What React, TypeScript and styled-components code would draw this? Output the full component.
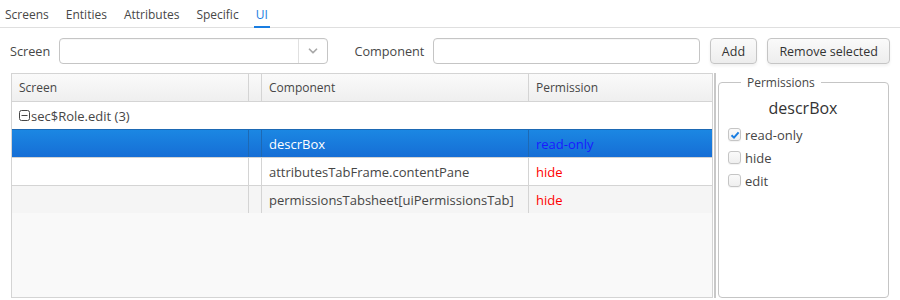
import styled, { createGlobalStyle } from "styled-components"
import { ChevronDown } from "lucide-react"

const GlobalStyle = createGlobalStyle`
  body {
    margin: 0;
    background: #fff;
    font-family: "Open Sans", "Liberation Sans", sans-serif;
    font-size: 13px;
    color: #474747;
  }
`

const Page = styled.div`
  width: 900px;
  height: 300px;
  display: flex;
  flex-direction: column;
  overflow: hidden;
`

const TabBar = styled.div`
  display: flex;
  height: 27px;
  padding-left: 3px;
  gap: 13px;
  border-bottom: 1px solid #dfdfdf;
`

const Tab = styled.div<{ $active?: boolean }>`
  display: flex;
  align-items: center;
  padding: 2px 2px 0 2px;
  margin-bottom: -1px;
  font-size: 12px;
  color: ${(p) => (p.$active ? "#197de1" : "#474747")};
  border-bottom: 2px solid ${(p) => (p.$active ? "#197de1" : "transparent")};
`

const Toolbar = styled.div`
  display: flex;
  align-items: center;
  height: 26px;
  margin-top: 10px;
  padding: 0 10px;
`

const Label = styled.span<{ $gapLeft?: number }>`
  margin-left: ${(p) => p.$gapLeft ?? 0}px;
  margin-right: 9px;
  font-size: 12.7px;
`

const Combo = styled.div`
  display: flex;
  width: 270px;
  height: 26px;
  box-sizing: border-box;
  border: 1px solid #c5c5c5;
  border-radius: 4px;
  box-shadow: inset 0 1px 0 #f7f7f7;
`

const ComboField = styled.div`
  flex: 1;
`

const ComboButton = styled.div`
  width: 28px;
  display: flex;
  align-items: center;
  justify-content: center;
  border-left: 1px solid #e0e0e0;
  color: #a8a8a8;
`

const TextInput = styled.div`
  width: 267px;
  height: 26px;
  box-sizing: border-box;
  border: 1px solid #c5c5c5;
  border-radius: 4px;
  box-shadow: inset 0 1px 0 #f7f7f7;
`

const Button = styled.div<{ $w: number }>`
  width: ${(p) => p.$w}px;
  height: 26px;
  margin-left: 10px;
  box-sizing: border-box;
  display: flex;
  align-items: center;
  justify-content: center;
  border: 1px solid #c5c5c5;
  border-radius: 4px;
  background: linear-gradient(#fafafa, #ededed);
  box-shadow: 0 2px 3px rgba(0, 0, 0, 0.06);
  font-size: 12.5px;
  color: #333;
`

const Main = styled.div`
  flex: 1;
  display: flex;
  margin-top: 9px;
  padding: 0 11px 2px 11px;
`

const Table = styled.div`
  width: 702px;
  box-sizing: border-box;
  border: 1px solid #d4d4d4;
  background: #f9f9f9;
  display: flex;
  flex-direction: column;
`

const Columns = "237px 13px 267px 1fr"

const HeaderRow = styled.div`
  display: grid;
  grid-template-columns: ${Columns};
  height: 27px;
  background: linear-gradient(#fafafa, #efefef);
  border-bottom: 1px solid #d4d4d4;
`

const HeaderCell = styled.div<{ $last?: boolean }>`
  display: flex;
  align-items: center;
  padding-left: 7px;
  border-right: ${(p) => (p.$last ? "none" : "1px solid #d4d4d4")};
  font-size: 12px;
  color: #464646;
`

const GroupRow = styled.div`
  height: 27px;
  display: flex;
  align-items: center;
  gap: 1px;
  padding-left: 7px;
  background: #fff;
  color: #464646;
`

const Row = styled.div<{ $selected?: boolean; $stripe?: boolean }>`
  display: grid;
  grid-template-columns: ${Columns};
  height: 28px;
  box-sizing: border-box;
  border-top: 1px solid ${(p) => (p.$selected ? "#1d69b4" : "#d4d4d4")};
  background: ${(p) =>
    p.$selected
      ? "linear-gradient(#1b87e3, #166ed5)"
      : p.$stripe
      ? "#f5f5f5"
      : "#fff"};
  color: ${(p) => (p.$selected ? "#fff" : "#464646")};
`

const Cell = styled.div<{ $selected?: boolean; $last?: boolean; $color?: string }>`
  display: flex;
  align-items: center;
  padding-left: 7px;
  border-right: ${(p) =>
    p.$last ? "none" : p.$selected ? "1px solid #1d69b4" : "1px solid #d4d4d4"};
  color: ${(p) => p.$color ?? "inherit"};
`

const Splitter = styled.div`
  width: 5px;
  display: flex;
  justify-content: center;
  &::before {
    content: "";
    width: 2px;
    margin-left: -1px;
    background: #c8c8c8;
  }
`

const Fieldset = styled.fieldset`
  flex: 1;
  margin: 1px 0 0 0;
  padding: 0 10px 0 9px;
  border: 1px solid #c5c5c5;
  border-radius: 4px;
  display: flex;
  flex-direction: column;
`

const Legend = styled.legend`
  margin-left: 13px;
  padding: 0 6px;
  font-size: 12px;
  color: #464646;
`

const Title = styled.div`
  text-align: center;
  font-size: 16px;
  color: #333;
  margin: 6px 0 4px 0;
`

const CheckRow = styled.label`
  display: flex;
  align-items: center;
  gap: 4px;
  height: 23px;
  color: #464646;
`

const Box = styled.span`
  width: 13px;
  height: 13px;
  box-sizing: border-box;
  border: 1px solid #c5c5c5;
  border-radius: 3px;
  background: linear-gradient(#fafafa, #efefef);
  box-shadow: 0 1px 1px rgba(0, 0, 0, 0.05);
  display: flex;
  align-items: center;
  justify-content: center;
`

function Check({ checked, label }: { checked?: boolean; label: string }) {
  return (
    <CheckRow>
      <Box>
        {checked && (
          <svg width="10" height="10" viewBox="0 0 10 10">
            <path d="M1.5 5.2 L4 7.6 L8.6 2.4" fill="none" stroke="#197de1" strokeWidth="2" />
          </svg>
        )}
      </Box>
      {label}
    </CheckRow>
  )
}

const rows = [
  { component: "descrBox", permission: "read-only", color: "#1a1aff", selected: true },
  { component: "attributesTabFrame.contentPane", permission: "hide", color: "#ff0000" },
  { component: "permissionsTabsheet[uiPermissionsTab]", permission: "hide", color: "#ff0000", stripe: true },
]

export default function App() {
  return (
    <Page>
      <GlobalStyle />
      <TabBar>
        <Tab>Screens</Tab>
        <Tab>Entities</Tab>
        <Tab>Attributes</Tab>
        <Tab>Specific</Tab>
        <Tab $active>UI</Tab>
      </TabBar>
      <Toolbar>
        <Label>Screen</Label>
        <Combo>
          <ComboField />
          <ComboButton>
            <ChevronDown size={14} strokeWidth={3} />
          </ComboButton>
        </Combo>
        <Label $gapLeft={26}>Component</Label>
        <TextInput />
        <Button $w={48}>Add</Button>
        <Button $w={123}>Remove selected</Button>
      </Toolbar>
      <Main>
        <Table>
          <HeaderRow>
            <HeaderCell>Screen</HeaderCell>
            <HeaderCell />
            <HeaderCell>Component</HeaderCell>
            <HeaderCell $last>Permission</HeaderCell>
          </HeaderRow>
          <GroupRow>
            <svg width="11" height="11" viewBox="0 0 11 11">
              <rect x="0.5" y="0.5" width="10" height="10" rx="2" fill="none" stroke="#464646" />
              <path d="M2.5 5.5 H8.5" stroke="#464646" />
            </svg>
            sec$Role.edit (3)
          </GroupRow>
          {rows.map((r) => (
            <Row key={r.component} $selected={r.selected} $stripe={r.stripe}>
              <Cell $selected={r.selected} />
              <Cell $selected={r.selected} />
              <Cell $selected={r.selected}>{r.component}</Cell>
              <Cell $selected={r.selected} $last $color={r.color}>
                {r.permission}
              </Cell>
            </Row>
          ))}
        </Table>
        <Splitter />
        <Fieldset>
          <Legend>Permissions</Legend>
          <Title>descrBox</Title>
          <Check checked label="read-only" />
          <Check label="hide" />
          <Check label="edit" />
        </Fieldset>
      </Main>
    </Page>
  )
}
